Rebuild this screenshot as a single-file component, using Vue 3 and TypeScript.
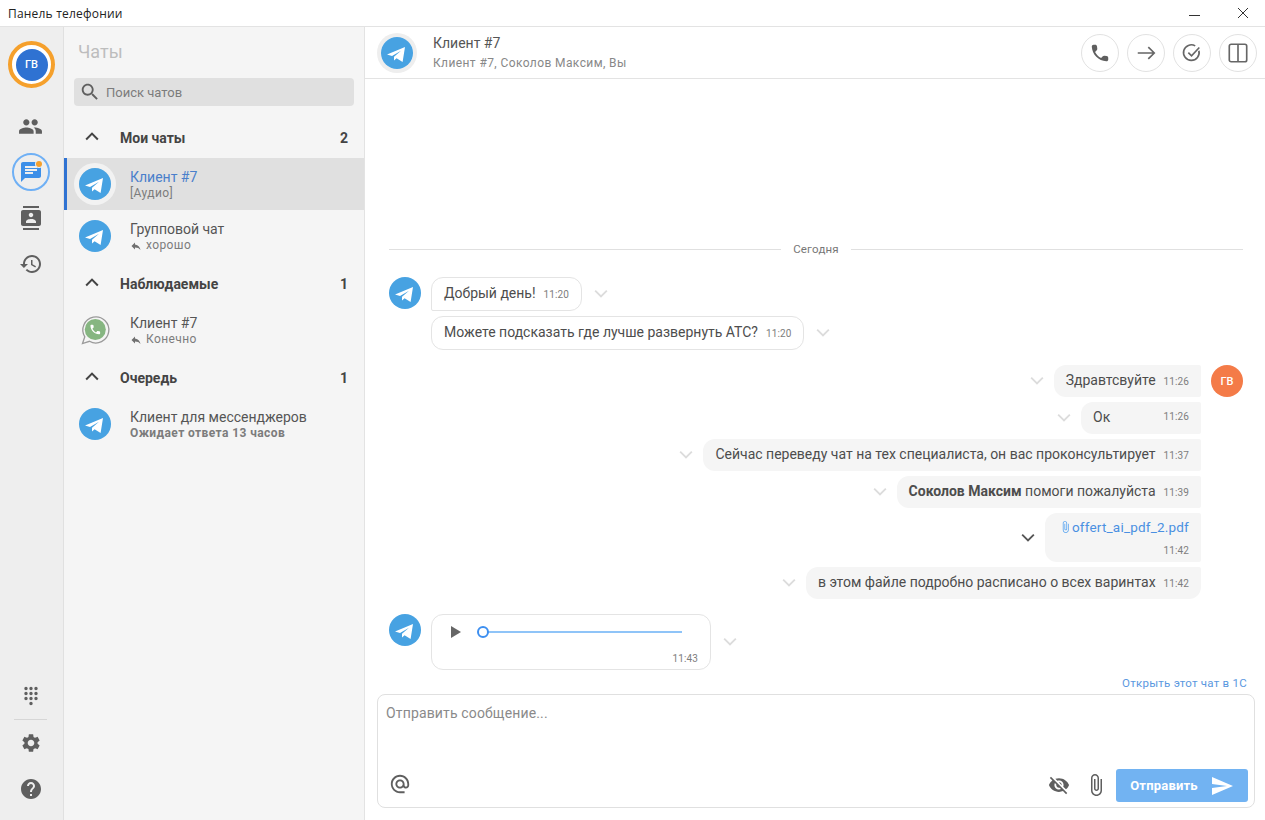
<script setup lang="ts">
const P: Record<string, string> = {
  people: 'M16 11c1.66 0 2.99-1.34 2.99-3S17.66 5 16 5c-1.66 0-3 1.34-3 3s1.34 3 3 3zm-8 0c1.66 0 2.99-1.34 2.99-3S9.66 5 8 5C6.34 5 5 6.34 5 8s1.34 3 3 3zm0 2c-2.33 0-7 1.17-7 3.5V19h14v-2.5c0-2.33-4.67-3.5-7-3.5zm8 0c-.29 0-.62.02-.97.05 1.16.84 1.97 1.97 1.97 3.45V19h6v-2.5c0-2.33-4.67-3.5-7-3.5z',
  chat: 'M20 2H4c-1.1 0-1.99.9-1.99 2L2 22l4-4h14c1.1 0 2-.9 2-2V4c0-1.1-.9-2-2-2zM6 9h12v2H6V9zm8 5H6v-2h8v2zm4-6H6V6h12v2z',
  contacts: 'M20 0H4v2h16V0zM4 24h16v-2H4v2zM20 4H4c-1.1 0-2 .9-2 2v12c0 1.1.9 2 2 2h16c1.1 0 2-.9 2-2V6c0-1.1-.9-2-2-2zm-8 2.75c1.24 0 2.25 1.01 2.25 2.25s-1.01 2.25-2.25 2.25S9.75 10.24 9.75 9 10.76 6.75 12 6.75zM17 17H7v-1.5c0-1.67 3.33-2.5 5-2.5s5 .83 5 2.5V17z',
  history: 'M13 3c-4.97 0-9 4.03-9 9H1l3.89 3.89.07.14L9 12H6c0-3.87 3.13-7 7-7s7 3.13 7 7-3.13 7-7 7c-1.93 0-3.68-.79-4.94-2.06l-1.42 1.42C8.27 19.99 10.51 21 13 21c4.97 0 9-4.03 9-9s-4.03-9-9-9zm-1 5v5l4.28 2.54.72-1.21-3.5-2.08V8H12z',
  dialpad: 'M12 19c-1.1 0-2 .9-2 2s.9 2 2 2 2-.9 2-2-.9-2-2-2zM6 1c-1.1 0-2 .9-2 2s.9 2 2 2 2-.9 2-2-.9-2-2-2zm0 6c-1.1 0-2 .9-2 2s.9 2 2 2 2-.9 2-2-.9-2-2-2zm0 6c-1.1 0-2 .9-2 2s.9 2 2 2 2-.9 2-2-.9-2-2-2zm12-8c1.1 0 2-.9 2-2s-.9-2-2-2-2 .9-2 2 .9 2 2 2zm-6 8c-1.1 0-2 .9-2 2s.9 2 2 2 2-.9 2-2-.9-2-2-2zm6 0c-1.1 0-2 .9-2 2s.9 2 2 2 2-.9 2-2-.9-2-2-2zm0-6c-1.1 0-2 .9-2 2s.9 2 2 2 2-.9 2-2-.9-2-2-2zm-6 0c-1.1 0-2 .9-2 2s.9 2 2 2 2-.9 2-2-.9-2-2-2zm0-6c-1.1 0-2 .9-2 2s.9 2 2 2 2-.9 2-2-.9-2-2-2z',
  settings: 'M19.14 12.94c.04-.3.06-.61.06-.94 0-.32-.02-.64-.07-.94l2.03-1.58c.18-.14.23-.41.12-.61l-1.92-3.32c-.12-.22-.37-.29-.59-.22l-2.39.96c-.5-.38-1.03-.7-1.62-.94l-.36-2.54c-.04-.24-.24-.41-.48-.41h-3.84c-.24 0-.43.17-.47.41l-.36 2.54c-.59.24-1.13.57-1.62.94l-2.39-.96c-.22-.08-.47 0-.59.22L2.74 8.87c-.12.21-.08.47.12.61l2.03 1.58c-.05.3-.09.63-.09.94s.02.64.07.94l-2.03 1.58c-.18.14-.23.41-.12.61l1.92 3.32c.12.22.37.29.59.22l2.39-.96c.5.38 1.03.7 1.62.94l.36 2.54c.05.24.24.41.48.41h3.84c.24 0 .44-.17.47-.41l.36-2.54c.59-.24 1.13-.56 1.62-.94l2.39.96c.22.08.47 0 .59-.22l1.92-3.32c.12-.22.07-.47-.12-.61l-2.01-1.58zM12 15.6c-1.98 0-3.6-1.62-3.6-3.6s1.62-3.6 3.6-3.6 3.6 1.62 3.6 3.6-1.62 3.6-3.6 3.6z',
  help: 'M12 2C6.48 2 2 6.48 2 12s4.48 10 10 10 10-4.48 10-10S17.52 2 12 2zm1 17h-2v-2h2v2zm2.07-7.75l-.9.92C13.45 12.9 13 13.5 13 15h-2v-.5c0-1.1.45-2.1 1.17-2.83l1.24-1.26c.37-.36.59-.86.59-1.41 0-1.1-.9-2-2-2s-2 .9-2 2H8c0-2.21 1.79-4 4-4s4 1.79 4 4c0 .88-.36 1.68-.93 2.25z',
  search: 'M15.5 14h-.79l-.28-.27C15.41 12.59 16 11.11 16 9.5 16 5.91 13.09 3 9.5 3S3 5.91 3 9.5 5.91 16 9.5 16c1.61 0 3.09-.59 4.23-1.57l.27.28v.79l5 4.99L20.49 19l-4.99-5zm-6 0C7.01 14 5 11.99 5 9.5S7.01 5 9.5 5 14 7.01 14 9.5 11.99 14 9.5 14z',
  reply: 'M10 9V5l-7 7 7 7v-4.1c5 0 8.5 1.6 11 5.1-1-5-4-10-11-11z',
  phone: 'M19.23 15.26l-2.54-.29c-.61-.07-1.21.14-1.64.57l-1.84 1.84c-2.83-1.44-5.15-3.75-6.59-6.59l1.85-1.85c.43-.43.64-1.03.57-1.64l-.29-2.52c-.12-1.01-.97-1.77-1.99-1.77H5.03c-1.13 0-2.07.94-2 2.07.53 8.54 7.36 15.36 15.89 15.89 1.13.07 2.07-.87 2.07-2v-1.73c.01-1.01-.75-1.86-1.76-1.98z',
  eyeOff: 'M12 7c2.76 0 5 2.24 5 5 0 .65-.13 1.26-.36 1.83l2.92 2.92c1.51-1.26 2.7-2.89 3.43-4.75-1.73-4.39-6-7.5-11-7.5-1.4 0-2.74.25-3.98.7l2.16 2.16C10.74 7.13 11.35 7 12 7zM2 4.27l2.28 2.28.46.46C3.08 8.3 1.78 10.02 1 12c1.73 4.39 6 7.5 11 7.5 1.55 0 3.03-.3 4.38-.84l.42.42L19.73 22 21 20.73 3.27 3 2 4.27zM7.53 9.8l1.55 1.55c-.05.21-.08.43-.08.65 0 1.66 1.34 3 3 3 .22 0 .44-.03.65-.08l1.55 1.55c-.67.33-1.41.53-2.2.53-2.76 0-5-2.24-5-5 0-.79.2-1.53.53-2.2zm4.31-.78l3.15 3.15.02-.16c0-1.66-1.34-3-3-3l-.17.01z',
  attach: 'M16.5 6v11.5c0 2.21-1.79 4-4 4s-4-1.79-4-4V5c0-1.38 1.12-2.5 2.5-2.5s2.5 1.12 2.5 2.5v10.5c0 .55-.45 1-1 1s-1-.45-1-1V6H10v9.5c0 1.38 1.12 2.5 2.5 2.5s2.5-1.12 2.5-2.5V5c0-2.21-1.79-4-4-4S7 2.79 7 5v12.5c0 3.04 2.46 5.5 5.5 5.5s5.5-2.46 5.5-5.5V6h-1.5z',
  send: 'M2.01 21L23 12 2.01 3 2 10l15 2-15 2z',
  at: 'M12 2C6.48 2 2 6.48 2 12s4.48 10 10 10h5v-2h-5c-4.34 0-8-3.66-8-8s3.66-8 8-8 8 3.66 8 8v1.43c0 .79-.71 1.57-1.5 1.57s-1.5-.78-1.5-1.57V12c0-2.76-2.24-5-5-5s-5 2.24-5 5 2.24 5 5 5c1.38 0 2.64-.56 3.54-1.47.65.89 1.77 1.47 2.96 1.47 1.97 0 3.5-1.6 3.5-3.57V12c0-5.52-4.48-10-10-10zm0 13c-1.66 0-3-1.34-3-3s1.34-3 3-3 3 1.34 3 3-1.34 3-3 3z',
}
const PLANE = 'M6 17.6 L24 10 L21.6 25 L15.6 21.200 L13 23.600 L13 19.800 L20 13.800 L11 19 Z'

interface Chat {
  name: string
  sub: string
  kind: 'tg' | 'wa'
  reply?: boolean
  active?: boolean
  strong?: boolean
}
const sections: { title: string; count: number; chats: Chat[] }[] = [
  {
    title: 'Мои чаты',
    count: 2,
    chats: [
      { name: 'Клиент #7', sub: '[Аудио]', kind: 'tg', active: true },
      { name: 'Групповой чат', sub: 'хорошо', kind: 'tg', reply: true },
    ],
  },
  {
    title: 'Наблюдаемые',
    count: 1,
    chats: [{ name: 'Клиент #7', sub: 'Конечно', kind: 'wa', reply: true }],
  },
  {
    title: 'Очередь',
    count: 1,
    chats: [{ name: 'Клиент для мессенджеров', sub: 'Ожидает ответа 13 часов', kind: 'tg', strong: true }],
  },
]
const incoming = [
  { text: 'Добрый день!', time: '11:20', cls: 'first' },
  { text: 'Можете подсказать где лучше развернуть АТС?', time: '11:20', cls: '' },
]
</script>

<template>
  <div class="app">
    <header class="titlebar">
      <span class="title">Панель телефонии</span>
      <div class="winbtns">
        <svg width="12" height="12" viewBox="0 0 12 12"><path d="M0 8.500h11" stroke="#333" stroke-width="1" /></svg>
        <svg width="12" height="12" viewBox="0 0 12 12"><path d="M1 1l10 10M11 1L1 11" stroke="#333" stroke-width="1" fill="none" /></svg>
      </div>
    </header>

    <div class="body">
      <nav class="rail">
        <div class="me"><span class="me-in">ГВ</span></div>
        <div class="rail-top">
          <button class="rail-btn"><svg viewBox="0 0 24 24" class="ic25"><path :d="P.people" /></svg></button>
          <button class="rail-btn on">
            <svg viewBox="0 0 24 24" class="ic24 blue"><path :d="P.chat" /></svg>
            <i class="dot"></i>
          </button>
          <button class="rail-btn"><svg viewBox="0 0 24 24" class="ic24"><path :d="P.contacts" /></svg></button>
          <button class="rail-btn"><svg viewBox="0 0 24 24" class="ic24"><path :d="P.history" /></svg></button>
        </div>
        <div class="rail-bottom">
          <button class="rail-sm"><svg viewBox="0 0 24 24" class="ic20"><path :d="P.dialpad" /></svg></button>
          <div class="rail-line"></div>
          <button class="rail-sm"><svg viewBox="0 0 24 24" class="ic22"><path :d="P.settings" /></svg></button>
          <button class="rail-sm help"><svg viewBox="0 0 24 24" class="ic24"><path :d="P.help" /></svg></button>
        </div>
      </nav>

      <aside class="list">
        <h2 class="list-title">Чаты</h2>
        <div class="search">
          <svg viewBox="0 0 24 24" class="ic22"><path :d="P.search" /></svg>
          <span>Поиск чатов</span>
        </div>
        <section v-for="s in sections" :key="s.title">
          <div class="sec-head">
            <svg viewBox="0 0 24 24" class="chev-up"><path d="M5 15l7-7 7 7" /></svg>
            <span class="sec-title">{{ s.title }}</span>
            <span class="sec-count">{{ s.count }}</span>
          </div>
          <div v-for="c in s.chats" :key="c.name + c.kind" class="row" :class="{ active: c.active }">
            <div class="ava-wrap">
              <svg v-if="c.kind === 'tg'" class="ava" viewBox="0 0 32 32">
                <circle cx="16" cy="16" r="16" fill="#47a2e2" />
                <path :d="PLANE" fill="#fff" />
              </svg>
              <svg v-else class="ava" viewBox="0 1 32 32">
                <path d="M3.500 30.500 L5.800 23.800 A13 13 0 1 1 10.500 28.300 Z" fill="#f5f5f5" stroke="#9a9a9a" stroke-width="1.3" />
                <circle cx="16.300" cy="16.500" r="10.500" fill="#86b681" />
                <path :d="P.phone" fill="#fff" transform="translate(9.800 10) scale(.54)" />
              </svg>
            </div>
            <div class="row-text">
              <div class="row-name">{{ c.name }}</div>
              <div class="row-sub" :class="{ strong: c.strong }">
                <svg v-if="c.reply" viewBox="0 0 24 24" class="reply"><path :d="P.reply" /></svg>
                <span>{{ c.sub }}</span>
              </div>
            </div>
          </div>
        </section>
      </aside>

      <main class="main">
        <div class="chat-head">
          <div class="head-ava">
            <svg class="ava" viewBox="0 0 32 32">
              <circle cx="16" cy="16" r="16" fill="#47a2e2" />
              <path :d="PLANE" fill="#fff" />
            </svg>
          </div>
          <div class="head-text">
            <div class="head-name">Клиент #7</div>
            <div class="head-sub">Клиент #7, Соколов Максим, Вы</div>
          </div>
          <div class="head-btns">
            <button class="round"><svg viewBox="0 0 24 24" class="ic22"><path :d="P.phone" /></svg></button>
            <button class="round">
              <svg viewBox="0 0 24 24" class="ic22 line"><path d="M3 12h18M14.500 5.500L21 12l-6.500 6.500" /></svg>
            </button>
            <button class="round">
              <svg viewBox="0 0 24 24" class="ic22 line"><path d="M19.500 9.500A8.500 8.500 0 1 1 15.500 4.200M8 11.500l3.500 3.500L20 6" /></svg>
            </button>
            <button class="round">
              <svg viewBox="0 0 24 24" class="ic22 line"><rect x="2.500" y="2.500" width="19" height="19" rx="2" /><path d="M12 2.500v19" /></svg>
            </button>
          </div>
        </div>

        <div class="feed">
          <div class="divider"><span>Сегодня</span></div>

          <div class="group in">
            <svg class="ava" viewBox="0 0 32 32">
              <circle cx="16" cy="16" r="16" fill="#47a2e2" />
              <path :d="PLANE" fill="#fff" />
            </svg>
            <div class="stack">
              <div v-for="m in incoming" :key="m.text" class="msg-line">
                <div class="bubble bin" :class="m.cls">{{ m.text }}<time>{{ m.time }}</time></div>
                <svg class="chev" viewBox="0 0 24 24"><path d="M5 8l7 7 7-7" /></svg>
              </div>
            </div>
          </div>

          <div class="group out">
            <div class="stack right">
              <div class="msg-line">
                <svg class="chev" viewBox="0 0 24 24"><path d="M5 8l7 7 7-7" /></svg>
                <div class="bubble bout">Здравтсвуйте<time>11:26</time></div>
              </div>
              <div class="msg-line">
                <svg class="chev" viewBox="0 0 24 24"><path d="M5 8l7 7 7-7" /></svg>
                <div class="bubble bout ok"><span>Ок</span><time>11:26</time></div>
              </div>
              <div class="msg-line">
                <svg class="chev" viewBox="0 0 24 24"><path d="M5 8l7 7 7-7" /></svg>
                <div class="bubble bout">Сейчас переведу чат на тех специалиста, он вас проконсультирует<time>11:37</time></div>
              </div>
              <div class="msg-line">
                <svg class="chev" viewBox="0 0 24 24"><path d="M5 8l7 7 7-7" /></svg>
                <div class="bubble bout"><b>Соколов Максим</b> помоги пожалуйста<time>11:39</time></div>
              </div>
              <div class="msg-line">
                <svg class="chev dark" viewBox="0 0 24 24"><path d="M5 8l7 7 7-7" /></svg>
                <div class="bubble bout file">
                  <a class="file-link"><svg viewBox="0 0 24 24" class="clip"><path :d="P.attach" /></svg>offert_ai_pdf_2.pdf</a>
                  <time>11:42</time>
                </div>
              </div>
              <div class="msg-line">
                <svg class="chev" viewBox="0 0 24 24"><path d="M5 8l7 7 7-7" /></svg>
                <div class="bubble bout last">в этом файле подробно расписано о всех варинтах<time>11:42</time></div>
              </div>
            </div>
            <div class="me-ava">ГВ</div>
          </div>

          <div class="group in audio-group">
            <svg class="ava" viewBox="0 0 32 32">
              <circle cx="16" cy="16" r="16" fill="#47a2e2" />
              <path :d="PLANE" fill="#fff" />
            </svg>
            <div class="msg-line">
              <div class="audio">
                <div class="player">
                  <svg viewBox="0 0 10 12" class="play"><path d="M0 0l10 6-10 6z" /></svg>
                  <div class="track"><i class="knob"></i></div>
                </div>
                <time>11:43</time>
              </div>
              <svg class="chev" viewBox="0 0 24 24"><path d="M5 8l7 7 7-7" /></svg>
            </div>
          </div>
        </div>

        <a class="open-1c">Открыть этот чат в 1С</a>

        <div class="composer">
          <div class="placeholder">Отправить сообщение...</div>
          <div class="tools">
            <svg viewBox="0 0 24 24" class="ic22 at"><path :d="P.at" /></svg>
            <div class="tools-right">
              <svg viewBox="0 0 24 24" class="ic22 eye"><path :d="P.eyeOff" /></svg>
              <svg viewBox="0 0 24 24" class="ic24 att"><path :d="P.attach" /></svg>
              <button class="send">
                <span>Отправить</span>
                <svg viewBox="0 0 24 24" class="send-ic"><path :d="P.send" /></svg>
              </button>
            </div>
          </div>
        </div>
      </main>
    </div>
  </div>
</template>

<style>
html, body { margin: 0; height: 100%; overflow: hidden; background: #fff; }
</style>

<style scoped>
.app {
  width: 1265px; height: 820px; display: flex; flex-direction: column;
  font-family: Roboto, "Noto Sans", sans-serif; color: #444; font-size: 14px;
  background: #fff; overflow: hidden;
}
button { border: 0; padding: 0; background: none; font: inherit; }
svg { display: block; flex: none; fill: #5f5f5f; }
.ic25 { width: 25px; height: 25px; }
.ic24 { width: 24px; height: 24px; }
.ic22 { width: 22px; height: 22px; }
.ic20 { width: 20px; height: 20px; }
.line { fill: none; stroke: #666; stroke-width: 1.800; }
.blue { fill: #3d8fe8; }

.titlebar {
  height: 26px; flex: none; display: flex; align-items: center; justify-content: space-between;
  border-bottom: 1px solid #e3e3e3; padding: 0 16px 0 8px;
}
.title { font-family: "Open Sans", sans-serif; font-size: 12px; color: #222; letter-spacing: .2px; }
.winbtns { display: flex; gap: 36px; }

.body { flex: 1; display: flex; min-height: 0; }

.rail {
  width: 63px; flex: none; background: #eeeeee; border-right: 1px solid #e0e0e0;
  display: flex; flex-direction: column; align-items: center; padding-top: 14px; box-sizing: content-box;
}
.me {
  width: 47px; height: 47px; box-sizing: border-box; border-radius: 50%; border: 4.500px solid #f5a02c;
  background: #fff; display: flex; align-items: center; justify-content: center; flex: none;
}
.me-in {
  width: 32px; height: 32px; border-radius: 50%; background: #2f72d2; color: #fff; font-size: 11px;
  font-weight: 500; display: flex; align-items: center; justify-content: center;
}
.rail-top { margin: 19px 2px 0 0; display: flex; flex-direction: column; gap: 8px; align-items: center; }
.rail-btn {
  width: 38px; height: 38px; display: flex; align-items: center; justify-content: center; position: relative;
  border-radius: 50%; box-sizing: border-box;
}
.rail-btn.on { border: 2px solid #6fb0f5; }
.dot {
  position: absolute; top: 6px; right: 6px; width: 6px; height: 6px; border-radius: 50%;
  background: #f5a02c; box-shadow: 0 0 0 1px #eee;
}
.rail-bottom { margin: auto 2px 0 0; display: flex; flex-direction: column; align-items: center; padding-bottom: 19px; }
.rail-sm { width: 40px; height: 24px; display: flex; align-items: center; justify-content: center; }
.rail-line { width: 33px; height: 1px; background: #d6d6d6; margin: 11px 0; }
.help { margin-top: 22px; }

.list { width: 300px; flex: none; background: #f5f5f5; border-right: 1px solid #e3e3e3; display: flex; flex-direction: column; }
.list-title { margin: 0; font-size: 18px; font-weight: 400; color: #bdbdbd; padding: 14px 0 0 14px; line-height: 22px; height: 22px; box-sizing: content-box; }
.search {
  margin: 15px 10px 10px; height: 28px; background: #e0e0e0; border-radius: 4px; display: flex; align-items: center;
  gap: 5px; padding-left: 5px; color: #7c7c7c; font-size: 13px;
}
.sec-head { height: 42px; display: flex; align-items: center; padding: 0 16px 0 18px; }
.chev-up { width: 20px; height: 20px; fill: none; stroke: #444; stroke-width: 2.400; }
.sec-title { margin: 1px 0 0 18px; font-weight: 700; color: #444; }
.sec-count { margin: 1px 0 0 auto; font-weight: 700; color: #444; }
.row { height: 52px; display: flex; align-items: center; padding-left: 15px; box-sizing: border-box; position: relative; }
.row.active { background: #e0e0e0; }
.row.active::before { content: ""; position: absolute; left: 0; top: 0; bottom: 0; width: 3px; background: #2f72d2; }
.ava { width: 32px; height: 32px; }
.ava-wrap { width: 32px; height: 32px; border-radius: 50%; flex: none; }
.row.active .ava-wrap { box-shadow: 0 0 0 5px #f2f2f2; }
.row-text { margin: 2px 0 0 19px; min-width: 0; }
.row-name { font-size: 14px; line-height: 16px; color: #555; }
.row.active .row-name { color: #4a7fcb; }
.row-sub { font-size: 12px; line-height: 15px; color: #7c7c7c; display: flex; align-items: center; gap: 4px; margin-top: 1px; letter-spacing: .4px; }
.row-sub.strong { font-weight: 700; }
.reply { width: 12px; height: 12px; fill: #707070; }

.main { flex: 1; min-width: 0; display: flex; flex-direction: column; background: #fff; }
.chat-head { height: 52px; flex: none; box-sizing: border-box; border-bottom: 1px solid #e3e3e3; display: flex; align-items: center; padding: 0 8px 0 16px; }
.head-ava { width: 32px; height: 32px; border-radius: 50%; box-shadow: 0 0 0 4px #eee; flex: none; }
.head-text { margin: -1px 0 0 20px; }
.head-name { font-size: 14px; line-height: 18px; color: #555; }
.head-sub { font-size: 12px; line-height: 16px; margin-top: 3px; color: #888; letter-spacing: .4px; }
.head-btns { margin-left: auto; display: flex; gap: 8px; }
.round {
  width: 38px; height: 38px; box-sizing: border-box; border: 1px solid #e2e2e2; border-radius: 50%;
  display: flex; align-items: center; justify-content: center;
}

.feed { flex: 1; min-height: 0; display: flex; flex-direction: column; justify-content: flex-end; padding: 0 22px 5px 24px; }
.divider { display: flex; align-items: center; gap: 12px; font-size: 11.500px; letter-spacing: .2px; color: #777; margin-bottom: 20px; height: 16px; }
.divider::before, .divider::after { content: ""; flex: 1; height: 1px; background: #e0e0e0; }
.group { display: flex; gap: 10px; align-items: flex-start; }
.group.out { margin-top: 15px; }
.audio-group { margin-top: 15px; }
.stack { display: flex; flex-direction: column; gap: 5px; flex: 1; }
.msg-line { display: flex; align-items: center; gap: 9px; }
.stack.right .msg-line { justify-content: flex-end; gap: 7px; }
.chev { width: 20px; height: 20px; fill: none; stroke: #dcdcdc; stroke-width: 2.200; }
.chev.dark { stroke: #555; }
.bubble { font-size: 14px; line-height: 16px; color: #4d4d4d; padding: 7px 12px 9px; box-sizing: border-box; border-radius: 12px; white-space: nowrap; }
.bin { background: #fff; border: 1px solid #e4e4e4; height: 34px; }
.bin.first { border-bottom-left-radius: 2px; }
.bout { background: #f5f5f5; height: 32px; border-radius: 12px 2px 2px 12px; }
.bout.last { border-bottom-right-radius: 12px; }
.bubble time { font-size: 10px; line-height: 1; color: #7d7d7d; margin-left: 8px; letter-spacing: .1px; }
.ok { width: 120px; display: flex; justify-content: space-between; align-items: center; }
.ok time { margin-left: 0; }
.file { height: 49px; display: flex; flex-direction: column; align-items: flex-end; padding: 6px 12px 6px 14px; justify-content: space-between; }
.file time { margin: 0; }
.file-link { color: #4a90e2; display: flex; align-items: center; font-size: 13.500px; letter-spacing: .2px; }
.clip { width: 13px; height: 14px; fill: #5aa5f0; }
.me-ava { width: 32px; height: 32px; border-radius: 50%; background: #f47b48; color: #fff; font-size: 11px; font-weight: 500; display: flex; align-items: center; justify-content: center; flex: none; }
.audio { width: 280px; height: 56px; box-sizing: border-box; border: 1px solid #e4e4e4; border-radius: 12px; padding: 9px 12px 5px 19px; display: flex; flex-direction: column; justify-content: space-between; align-items: stretch; }
.audio time { align-self: flex-end; font-size: 10px; color: #7d7d7d; letter-spacing: .1px; }
.player { display: flex; align-items: center; gap: 22px; height: 16px; }
.play { width: 10px; height: 12px; fill: #666; }
.track { width: 199px; height: 2px; background: #8fc4f8; position: relative; }
.knob { position: absolute; left: -6px; top: -5px; width: 8px; height: 8px; border: 2px solid #3d8ff0; border-radius: 50%; background: #fff; }

.open-1c { align-self: flex-end; margin-right: 18px; font-size: 11.500px; line-height: 16px; color: #5a98e0; margin-bottom: 3px; letter-spacing: .25px; }
.composer {
  margin: 0 10px 12px 12px; height: 114px; flex: none; box-sizing: border-box; border: 1px solid #e0e0e0; border-radius: 8px;
  padding: 9px 6px 5px 8px; display: flex; flex-direction: column; justify-content: space-between;
}
.placeholder { color: #8a8a8a; font-size: 14px; line-height: 18px; letter-spacing: .15px; }
.tools { display: flex; align-items: center; justify-content: space-between; height: 33px; padding-left: 3px; }
.tools-right { display: flex; align-items: center; }
.at { margin-top: -3px; }
.eye { margin: -2px 14px 0 0; }
.att { margin: -2px 8px 0 0; }
.send {
  width: 132px; height: 33px; background: #72b3f2; border-radius: 3px; display: flex; align-items: center; justify-content: center;
  gap: 12px; color: #fff; font-weight: 700; font-size: 13px; letter-spacing: .2px;
}
.send-ic { width: 24px; height: 24px; fill: #fff; }
</style>
